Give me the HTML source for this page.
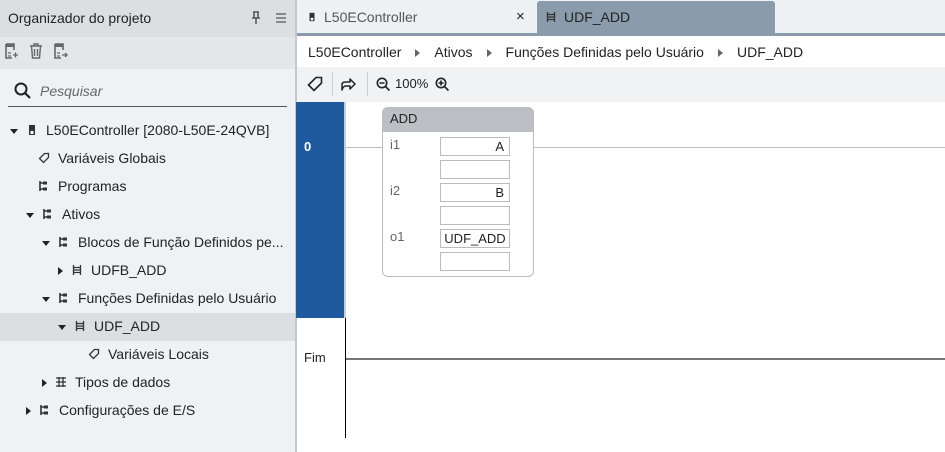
<!DOCTYPE html>
<html><head><style>
*{margin:0;padding:0;box-sizing:border-box}
body{width:945px;height:452px;overflow:hidden;font-family:"Liberation Sans",sans-serif;font-size:14px;color:#222;background:#fff;position:relative}
.a{position:absolute}
.row{position:absolute;left:0;width:295px;height:28px;line-height:28px;white-space:nowrap}
.row svg{vertical-align:middle;margin-right:8px;position:relative;top:-1px}
.tri{display:inline-block;width:0;height:0;border-left:4px solid transparent;border-right:4px solid transparent;border-top:5px solid #222;vertical-align:middle;margin-right:8px}
.trr{display:inline-block;width:0;height:0;border-top:4px solid transparent;border-bottom:4px solid transparent;border-left:5px solid #222;vertical-align:middle;margin:0 8px 0 2px}
.box{position:absolute;left:440px;width:70px;height:19px;border:1px solid #bbb;background:#fff;font-size:13px;text-align:right;padding-right:5px;line-height:17px}
.sep{display:inline-block;width:0;height:0;border-top:4px solid transparent;border-bottom:4px solid transparent;border-left:5px solid #666;margin:0 14px 0 14px;vertical-align:middle}
</style></head><body>
<svg width="0" height="0" style="position:absolute">
<defs>
<symbol id="tree" viewBox="0 0 12 12"><path d="M2 1v10M2 3h4M2 9h4" stroke="#333" stroke-width="1.6" fill="none"/><rect x="5" y="1.5" width="4" height="3" fill="#333"/><rect x="5" y="7.5" width="4" height="3" fill="#333"/></symbol>
<symbol id="tag" viewBox="0 0 12 12"><path d="M6.5 1.5h4v4l-5 5-4-4z" stroke="#333" stroke-width="1.3" fill="none"/></symbol>
<symbol id="lad" viewBox="0 0 12 12"><path d="M2.5 1v10M9.5 1v10M2.5 3.5h7M2.5 6h7M2.5 8.5h7" stroke="#333" stroke-width="1.3" fill="none"/></symbol>
<symbol id="ctl" viewBox="0 0 12 12"><rect x="3" y="1" width="6" height="10" fill="#333"/><rect x="4.5" y="7" width="3" height="3" fill="#fff"/></symbol>
<symbol id="dt" viewBox="0 0 12 12"><path d="M1 2h10M1 6h10M1 10h10M4 1v10M8 1v10" stroke="#333" stroke-width="1.3" fill="none"/></symbol>
</defs></svg>
<div class="a" style="left:0;top:0;width:295px;height:452px;background:#eef2f5"></div>
<div class="a" style="left:0;top:0;width:295px;height:37px;background:#dcdfe2"></div>
<div class="a" style="left:8px;top:10px;font-size:14px">Organizador do projeto</div>
<svg class="a" style="left:250px;top:11px" width="12" height="14" viewBox="0 0 12 14"><path d="M3 1h6M4 1v6M8 1v6M2 7h8M6 7v6" stroke="#555" stroke-width="1.5" fill="none"/></svg>
<svg class="a" style="left:275px;top:13px" width="12" height="10" viewBox="0 0 12 10"><path d="M1 1h10M1 5h10M1 9h10" stroke="#555" stroke-width="1.3"/></svg>
<div class="a" style="left:0;top:37px;width:295px;height:32px;background:#e4e7ea"></div>
<svg class="a" style="left:5px;top:43px" width="14" height="16" viewBox="0 0 14 16"><path d="M1 1h8v6M1 1v14h6" stroke="#666" stroke-width="1.6" fill="none"/><rect x="1" y="1" width="8" height="3" fill="#666"/><path d="M8 12h5M10.5 9.5v5M3 10h3M3 13h3" stroke="#666" stroke-width="1.3"/></svg>
<svg class="a" style="left:29px;top:43px" width="14" height="16" viewBox="0 0 14 16"><path d="M1 3h12M5 3V1h4v2M2.5 3l1 12h7l1-12M5.5 6v7M8.5 6v7" stroke="#666" stroke-width="1.4" fill="none"/></svg>
<svg class="a" style="left:54px;top:43px" width="14" height="16" viewBox="0 0 14 16"><path d="M1 1h8v6M1 1v14h6" stroke="#666" stroke-width="1.6" fill="none"/><rect x="1" y="1" width="8" height="3" fill="#666"/><path d="M8 12h5M11 10l2 2-2 2M3 10h3M3 13h3" stroke="#666" stroke-width="1.3" fill="none"/></svg>
<svg class="a" style="left:14px;top:82px" width="18" height="18" viewBox="0 0 18 18"><circle cx="7" cy="7" r="5.5" stroke="#222" stroke-width="2" fill="none"/><path d="M11 11l5 5" stroke="#222" stroke-width="2.2"/></svg>
<div class="a" style="left:40px;top:83px;font-style:italic;color:#666">Pesquisar</div>
<div class="a" style="left:8px;top:106px;width:279px;height:1px;background:#555"></div>
<div class="a" style="left:0;top:313px;width:295px;height:28px;background:#dcdfe2"></div>
<div class="row" style="top:116px;left:10px"><span class="tri"></span><svg width="12" height="12"><use href="#ctl"/></svg>L50EController [2080-L50E-24QVB]</div>
<div class="row" style="top:144px;left:38px"><svg width="12" height="12"><use href="#tag"/></svg>Variáveis Globais</div>
<div class="row" style="top:172px;left:38px"><svg width="12" height="12"><use href="#tree"/></svg>Programas</div>
<div class="row" style="top:200px;left:26px"><span class="tri"></span><svg width="12" height="12"><use href="#tree"/></svg>Ativos</div>
<div class="row" style="top:228px;left:42px"><span class="tri"></span><svg width="12" height="12"><use href="#tree"/></svg>Blocos de Função Definidos pe...</div>
<div class="row" style="top:256px;left:56px"><span class="trr"></span><svg width="12" height="12"><use href="#lad"/></svg>UDFB_ADD</div>
<div class="row" style="top:284px;left:42px"><span class="tri"></span><svg width="12" height="12"><use href="#tree"/></svg>Funções Definidas pelo Usuário</div>
<div class="row" style="top:312px;left:58px"><span class="tri"></span><svg width="12" height="12"><use href="#lad"/></svg>UDF_ADD</div>
<div class="row" style="top:340px;left:88px"><svg width="12" height="12"><use href="#tag"/></svg>Variáveis Locais</div>
<div class="row" style="top:368px;left:40px"><span class="trr"></span><svg width="12" height="12"><use href="#dt"/></svg>Tipos de dados</div>
<div class="row" style="top:396px;left:24px"><span class="trr"></span><svg width="12" height="12"><use href="#tree"/></svg>Configurações de E/S</div>
<div class="a" style="left:295px;top:0;width:2px;height:452px;background:#c4c8cc"></div>
<div class="a" style="left:297px;top:0;width:648px;height:34px;background:#eef1f4"></div>
<div class="a" style="left:297px;top:33px;width:648px;height:3px;background:#8a9aaa"></div>
<div class="a" style="left:537px;top:1px;width:238px;height:35px;background:#8a9bab;border-radius:3px 3px 0 0"></div>
<svg class="a" style="left:307px;top:11px" width="10" height="12"><use href="#ctl"/></svg>
<div class="a" style="left:324px;top:9px;color:#555">L50EController</div>
<div class="a" style="left:516px;top:8px;font-size:15px">×</div>
<svg class="a" style="left:545px;top:11px" width="12" height="12"><use href="#lad"/></svg>
<div class="a" style="left:564px;top:9px">UDF_ADD</div>
<div class="a" style="left:308px;top:44px;white-space:nowrap">L50EController<span class="sep"></span>Ativos<span class="sep"></span>Funções Definidas pelo Usuário<span class="sep"></span>UDF_ADD</div>
<div class="a" style="left:297px;top:67px;width:648px;height:35px;background:#f0f2f4"></div>
<svg class="a" style="left:307px;top:76px" width="16" height="16" viewBox="0 0 16 16"><path d="M9 1.5h5.5v5.5l-7.5 7.5-5.5-5.5z" stroke="#222" stroke-width="1.6" fill="none"/></svg>
<div class="a" style="left:332px;top:72px;width:1px;height:24px;background:#ccc"></div>
<svg class="a" style="left:340px;top:76px" width="16" height="16" viewBox="0 0 16 16"><path d="M2 14V9c0-2 1-3 3-3h5V3l5 5-5 5v-3H6c-2 0-3 1-4 4z" stroke="#222" stroke-width="1.5" fill="none" stroke-linejoin="round"/></svg>
<div class="a" style="left:367px;top:72px;width:1px;height:24px;background:#ccc"></div>
<svg class="a" style="left:376px;top:77px" width="15" height="15" viewBox="0 0 15 15"><circle cx="6" cy="6" r="4.7" stroke="#222" stroke-width="1.6" fill="none"/><path d="M9.5 9.5l4 4M3.5 6h5" stroke="#222" stroke-width="1.6"/></svg>
<div class="a" style="left:395px;top:76px;font-size:13px">100%</div>
<svg class="a" style="left:435px;top:77px" width="15" height="15" viewBox="0 0 15 15"><circle cx="6" cy="6" r="4.7" stroke="#222" stroke-width="1.6" fill="none"/><path d="M9.5 9.5l4 4M3.5 6h5M6 3.5v5" stroke="#222" stroke-width="1.6"/></svg>
<div class="a" style="left:296px;top:102px;width:48px;height:216px;background:#1f5a9e"></div>
<div class="a" style="left:304px;top:139px;color:#fff;font-weight:bold;font-size:13px">0</div>
<div class="a" style="left:344px;top:102px;width:2px;height:216px;background:#ccc"></div>
<div class="a" style="left:345px;top:318px;width:1px;height:120px;background:#000"></div>
<div class="a" style="left:346px;top:147px;width:599px;height:1px;background:#bbb"></div>
<div class="a" style="left:346px;top:358px;width:599px;height:2px;background:#777"></div>
<div class="a" style="left:304px;top:350px;font-size:13px">Fim</div>
<div class="a" style="left:382px;top:107px;width:152px;height:170px;background:#fff;border:1px solid #bbb;border-radius:6px"></div>
<div class="a" style="left:382px;top:107px;width:152px;height:25px;background:#bcc0c4;border-radius:6px 6px 0 0;padding:4px 8px;font-size:13px">ADD</div>
<div class="a" style="left:390px;top:137px;color:#666;font-size:13px">i1</div>
<div class="a" style="left:390px;top:183px;color:#666;font-size:13px">i2</div>
<div class="a" style="left:390px;top:229px;color:#666;font-size:13px">o1</div>
<div class="box" style="top:137px">A</div>
<div class="box" style="top:160px"></div>
<div class="box" style="top:183px">B</div>
<div class="box" style="top:206px"></div>
<div class="box" style="top:229px;text-align:center;padding:0">UDF_ADD</div>
<div class="box" style="top:252px"></div>
</body></html>
